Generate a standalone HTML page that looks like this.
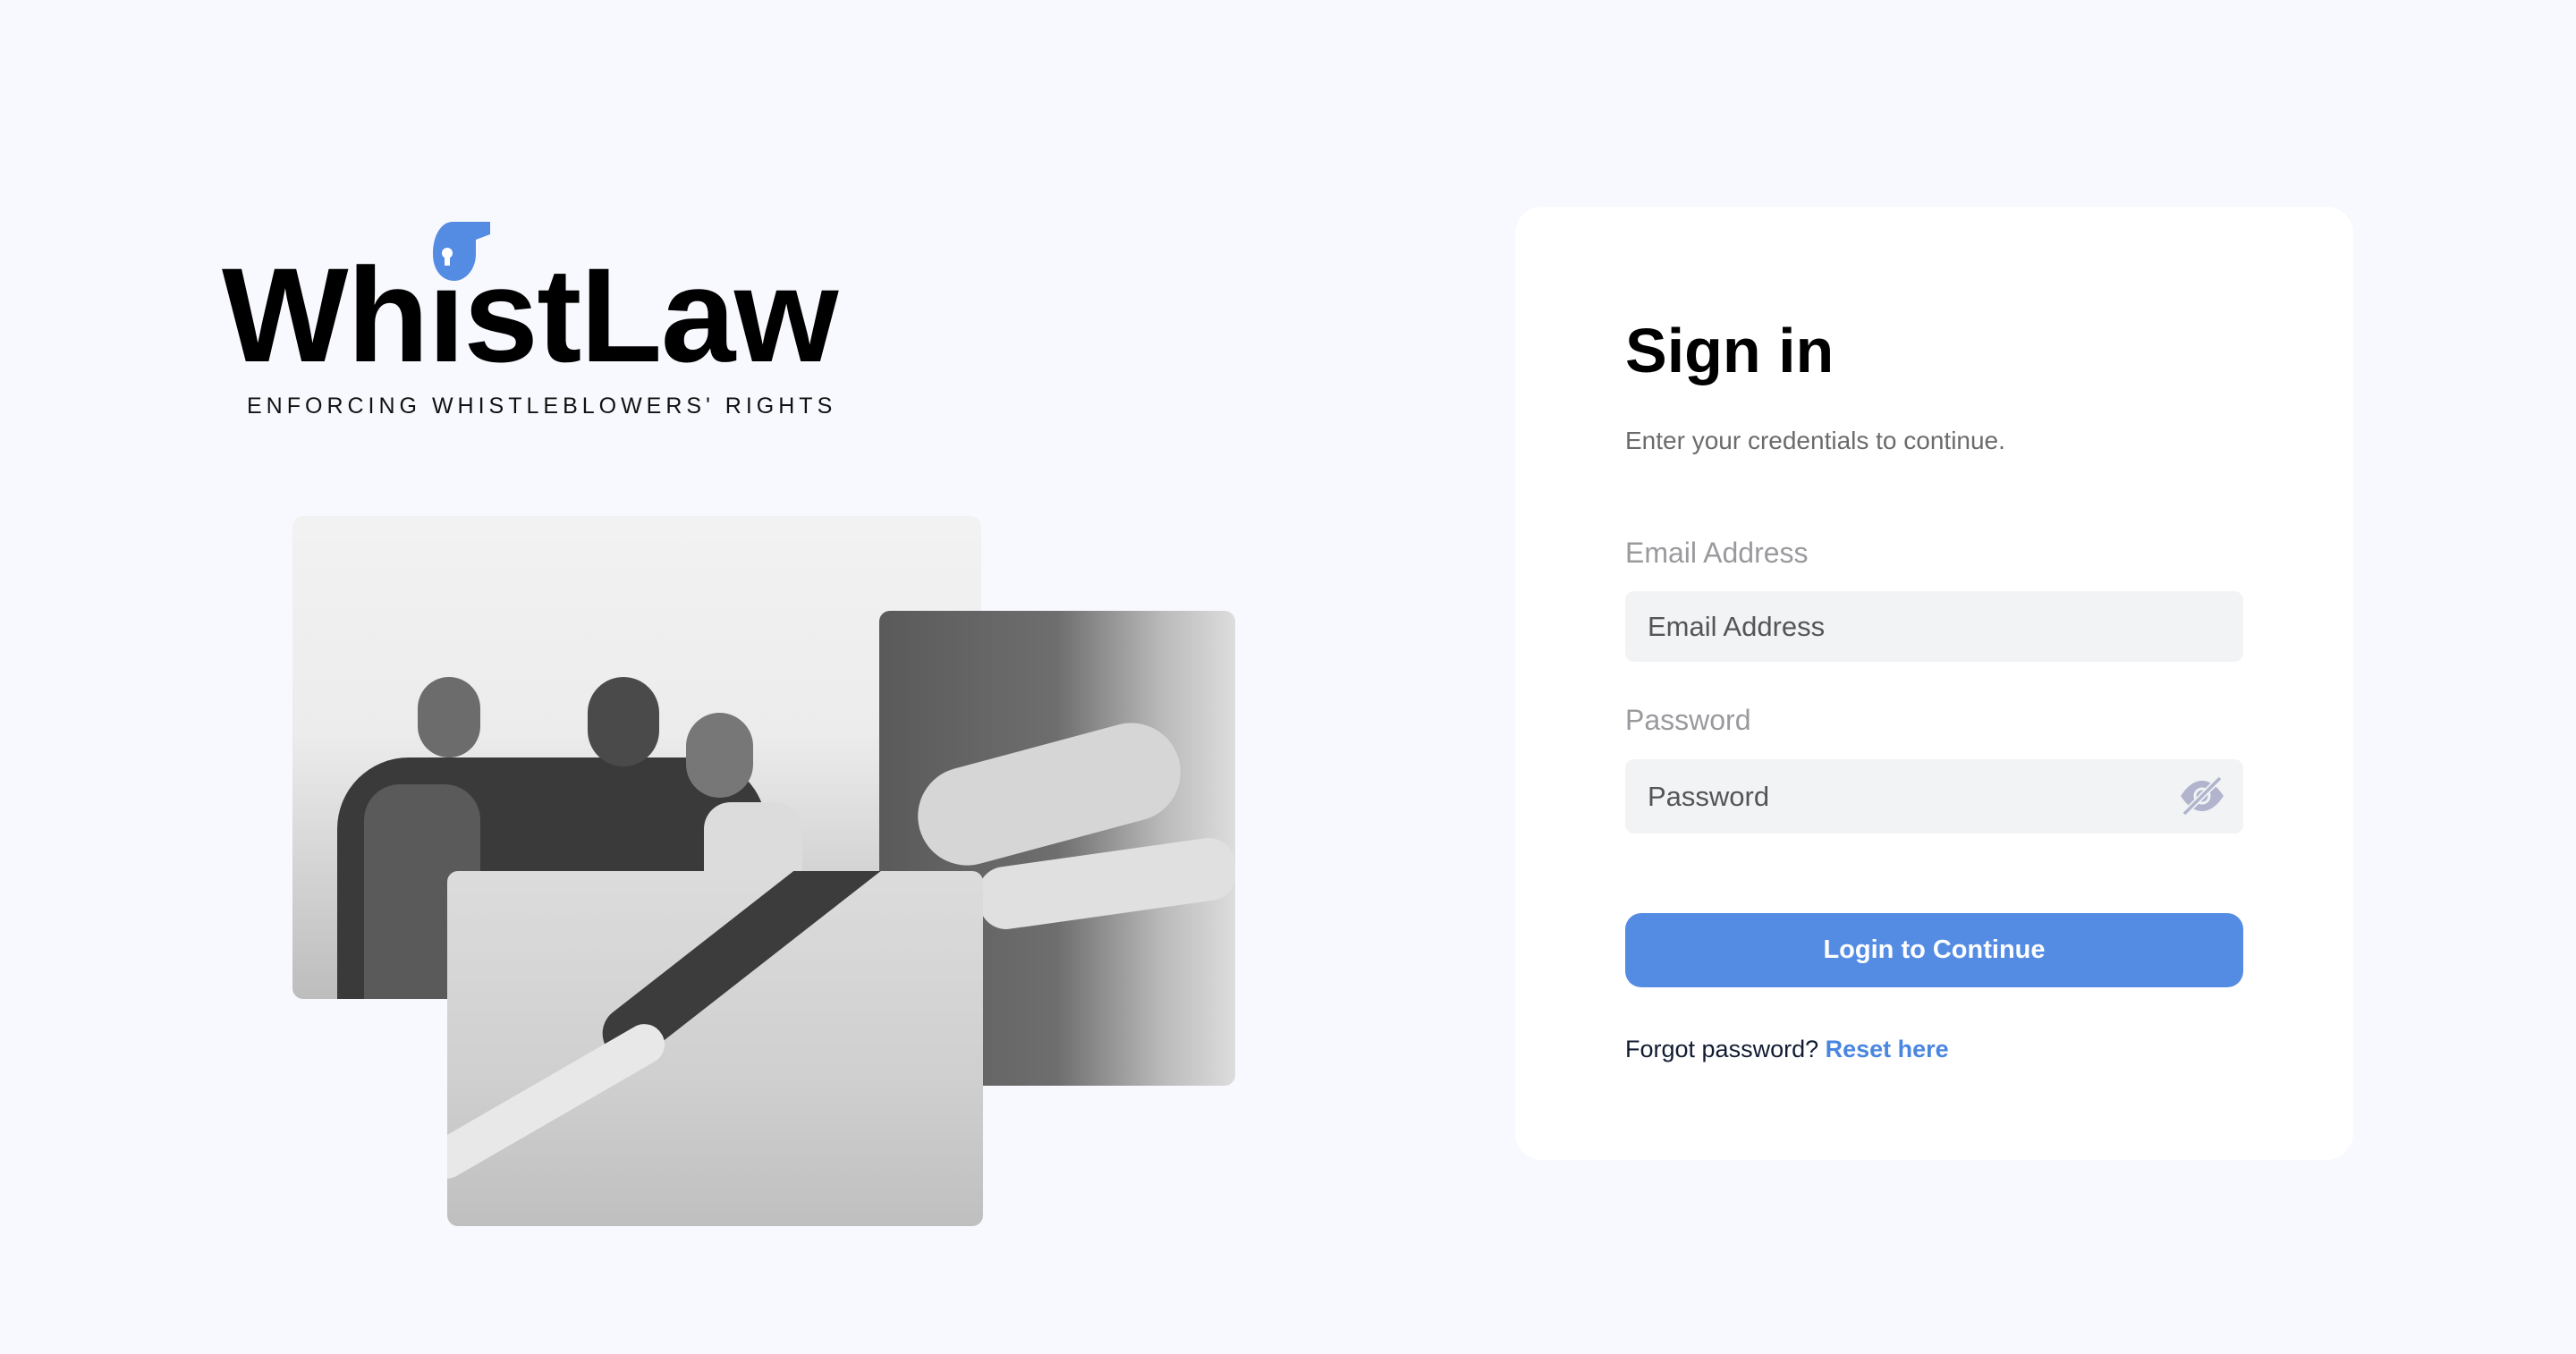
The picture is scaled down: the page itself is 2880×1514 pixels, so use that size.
<!DOCTYPE html>
<html><head><meta charset="utf-8"><style>
*{margin:0;padding:0;box-sizing:border-box}
body{width:2880px;height:1514px;background:#f8f9fe;font-family:"Liberation Sans",Arial,sans-serif;position:relative;overflow:hidden}
.abs{position:absolute}
.logo{left:248px;top:277px;font-size:150px;font-weight:bold;color:#000;letter-spacing:-1.5px;line-height:1}
.tag{left:276px;top:440px;font-size:25px;letter-spacing:5px;color:#111}
.ph{position:absolute;border-radius:12px;overflow:hidden}
.card{left:1694px;top:231px;width:937px;height:1066px;background:#fff;border-radius:30px}
.h1{left:1817px;top:352px;font-size:70px;font-weight:bold;color:#000}
.sub{left:1817px;top:477px;font-size:28px;color:#6b6b6b}
.lbl{font-size:32px;color:#9a9a9e}
.inp{left:1817px;width:691px;background:#f2f3f5;border-radius:10px;font-size:31px;color:#555;padding-left:25px;display:flex;align-items:center}
.btn{left:1817px;top:1021px;width:691px;height:83px;background:#558ce3;border-radius:18px;color:#fff;font-weight:bold;font-size:29px;display:flex;align-items:center;justify-content:center}
.fg{left:1817px;top:1158px;font-size:27px;color:#111c33}
.fg b{color:#4a86e0}
</style></head><body>
<div class="abs logo">Whıst­Law</div>
<svg class="abs" style="left:466px;top:248px" width="84" height="66" viewBox="0 0 84 66">
<path d="M40 0 H82 V14 L66 20 V36 C66 54 54 66 42 66 C28 66 18 54 18 36 C18 14 28 0 40 0Z" fill="#558ce3"/>
<circle cx="34" cy="35" r="6" fill="#fff"/><rect x="31" y="36" width="6" height="13" fill="#fff"/>
</svg>
<div class="abs tag">ENFORCING WHISTLEBLOWERS' RIGHTS</div>

<div class="ph" style="left:327px;top:577px;width:770px;height:540px;background:linear-gradient(180deg,#f2f2f2 0%,#ececec 45%,#bdbdbd 100%)">
 <div class="abs" style="left:50px;top:270px;width:480px;height:270px;background:#3a3a3a;border-radius:80px 80px 0 0"></div>
 <div class="abs" style="left:80px;top:300px;width:130px;height:240px;background:#5a5a5a;border-radius:40px 40px 0 0"></div>
 <div class="abs" style="left:140px;top:180px;width:70px;height:90px;background:#6c6c6c;border-radius:35px"></div>
 <div class="abs" style="left:330px;top:180px;width:80px;height:100px;background:#4a4a4a;border-radius:40px"></div>
 <div class="abs" style="left:440px;top:220px;width:75px;height:95px;background:#777;border-radius:38px"></div>
 <div class="abs" style="left:460px;top:320px;width:110px;height:220px;background:#dcdcdc;border-radius:30px 30px 0 0"></div>
</div>
<div class="ph" style="left:983px;top:683px;width:398px;height:531px;background:linear-gradient(90deg,#5a5a5a 0%,#6e6e6e 50%,#bbb 80%,#ddd 100%)">
 <div class="abs" style="left:40px;top:150px;width:300px;height:110px;background:#d6d6d6;border-radius:60px;transform:rotate(-15deg)"></div>
 <div class="abs" style="left:110px;top:270px;width:290px;height:70px;background:#e0e0e0;border-radius:30px;transform:rotate(-8deg)"></div>
</div>
<div class="ph" style="left:500px;top:974px;width:599px;height:397px;background:linear-gradient(180deg,#dcdcdc 0%,#cfcfcf 60%,#bfbfbf 100%)">
 <div class="abs" style="left:180px;top:170px;width:520px;height:60px;background:#3c3c3c;border-radius:30px;transform:rotate(-38deg);transform-origin:left center"></div>
 <div class="abs" style="left:-20px;top:310px;width:300px;height:45px;background:#e8e8e8;border-radius:22px;transform:rotate(-30deg);transform-origin:left center"></div>
</div>

<div class="abs card"></div>
<div class="abs h1">Sign in</div>
<div class="abs sub">Enter your credentials to continue.</div>
<div class="abs lbl" style="left:1817px;top:600px">Email Address</div>
<div class="abs inp" style="top:661px;height:79px">Email Address</div>
<div class="abs lbl" style="left:1817px;top:787px">Password</div>
<div class="abs inp" style="top:849px;height:83px">Password</div>
<svg class="abs" style="left:2436px;top:867px" width="52" height="46" viewBox="0 0 52 46">
<path d="M2 23 C10 11 18 6 26 6 C34 6 42 11 50 23 C42 35 34 40 26 40 C18 40 10 35 2 23Z" fill="#b1b4cc"/>
<circle cx="26" cy="23" r="8" fill="none" stroke="#f2f3f5" stroke-width="3"/>
<line x1="6" y1="43" x2="46" y2="3" stroke="#f2f3f5" stroke-width="7"/>
<line x1="6" y1="43" x2="46" y2="3" stroke="#b1b4cc" stroke-width="3.5"/>
</svg>
<div class="abs btn">Login to Continue</div>
<div class="abs fg">Forgot password? <b>Reset here</b></div>
</body></html>
